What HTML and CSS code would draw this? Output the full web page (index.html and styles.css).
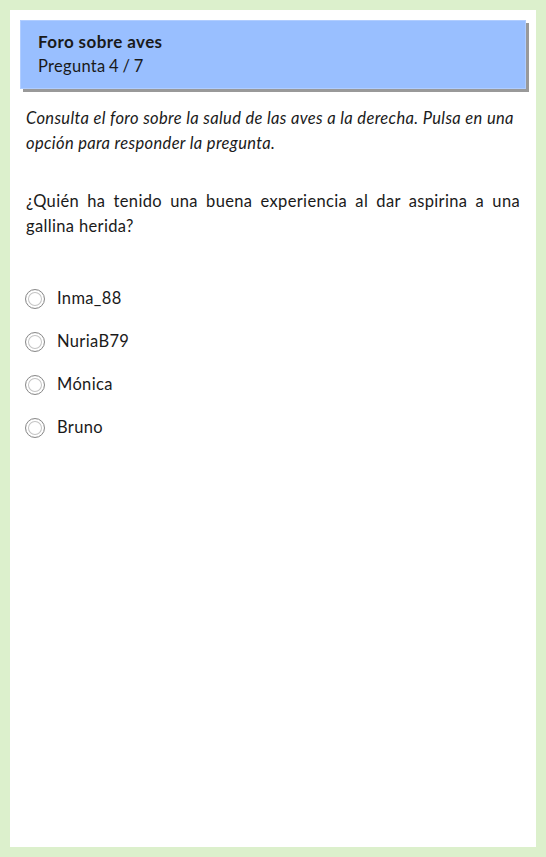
FILE: index.html
```html
<!DOCTYPE html>
<html lang="es">
<head>
  <meta charset="UTF-8">
  <title>Foro sobre aves</title>
  <link rel="stylesheet" href="styles.css">
</head>
<body>

<div class="page">
  <div class="header">
    <div class="title">Foro sobre aves</div>
    <div class="subtitle">Pregunta 4 / 7</div>
  </div>

  <div class="content">
    <p class="intro">Consulta el foro sobre la salud de las aves a la derecha. Pulsa en una opción para responder la pregunta.</p>

    <p class="question">¿Quién ha tenido una buena experiencia al dar aspirina a una gallina herida?</p>

    <ul class="options">
      <li><span class="radio"></span>Inma_88</li>
      <li><span class="radio"></span>NuriaB79</li>
      <li><span class="radio"></span>Mónica</li>
      <li><span class="radio"></span>Bruno</li>
    </ul>
  </div>
</div>

</body>
</html>
```

FILE: styles.css
```css
body {
  margin: 0;
  background: #dcf0cc;
  font-family: Lato, "Open Sans", sans-serif;
  color: #1a1a1a;
}
.page {
  background: white;
  margin: 10px;
  height: 837px;
  padding: 10px;
  box-sizing: border-box;
}
.header {
  background: #99bfff;
  border: 1px solid #b0cdff;
  padding: 9px 17px 10px;
  box-shadow: 3px 3px 0 #999;
}
.title {
  font-weight: bold;
  font-size: 17px;
  line-height: 24px;
  letter-spacing: 0.4px;
}
.subtitle {
  font-size: 16.5px;
  line-height: 24px;
  letter-spacing: 0.3px;
  word-spacing: -1px;
}
.content {
  padding: 0 6px;
  font-size: 16.5px;
  line-height: 25px;
  letter-spacing: 0.35px;
}
.intro {
  font-style: italic;
  margin: 17px 0 0;
}
.question {
  text-align: justify;
  margin: 33px 0 0;
}
.options {
  list-style: none;
  padding: 0;
  margin: 38px 0 0;
}
.options li {
  display: flex;
  align-items: center;
  padding: 9px 0;
}
.radio {
  width: 18px;
  height: 18px;
  border: 1px solid #8a8a8a;
  border-radius: 50%;
  box-shadow: inset 0 0 0 2px #fff, inset 0 0 0 3px #c4c4c4;
  margin: 0 12px 0 -1px;
  flex-shrink: 0;
}
```
